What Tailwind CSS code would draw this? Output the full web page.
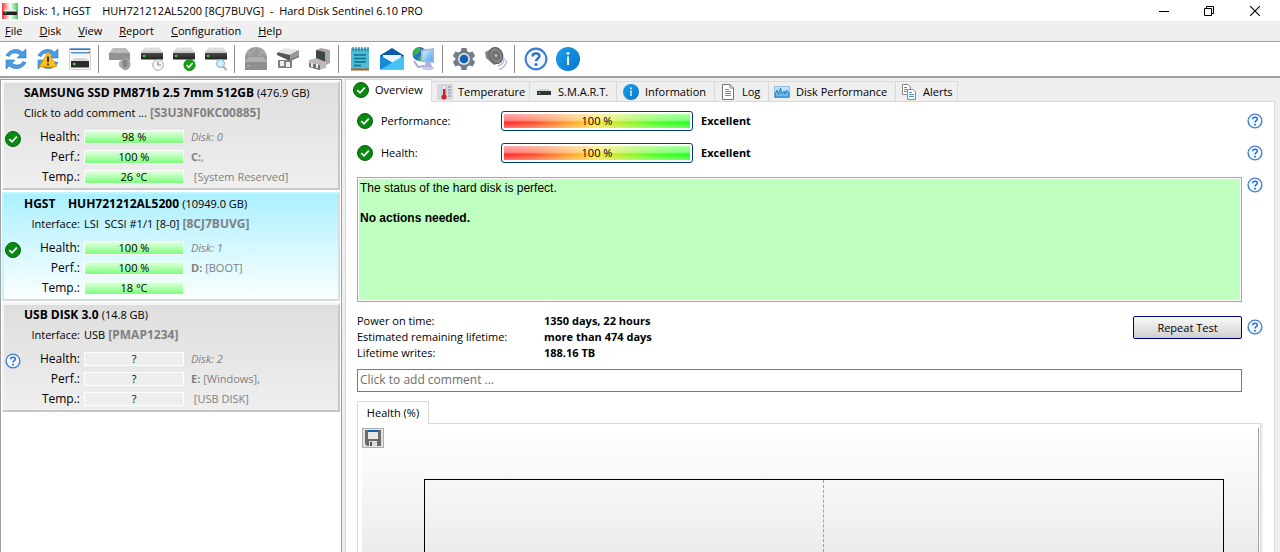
<!DOCTYPE html>
<html lang="en">
<head>
<meta charset="utf-8">
<title>Hard Disk Sentinel</title>
<script src="https://cdn.jsdelivr.net/npm/@tailwindcss/browser@4"></script>
</head>
<body class="h-screen overflow-hidden flex flex-col bg-[#efefef] font-['Open_Sans',sans-serif] text-[12px] leading-4 text-black">
<svg class="absolute w-0 h-0" xmlns="http://www.w3.org/2000/svg">
  <defs>
    <linearGradient id="gInfo" x1="0" y1="0" x2="1" y2="1"><stop offset="0" stop-color="#1aa0ea"/><stop offset="1" stop-color="#0a74cc"/></linearGradient>
    <linearGradient id="gDark" x1="0" y1="0" x2="0" y2="1"><stop offset="0" stop-color="#4a4a4a"/><stop offset="1" stop-color="#222"/></linearGradient>
    <linearGradient id="gTop" x1="0" y1="0" x2="0" y2="1"><stop offset="0" stop-color="#ececec"/><stop offset="1" stop-color="#c4c4c4"/></linearGradient>
    <linearGradient id="gApp" x1="0" y1="0" x2="1" y2="0"><stop offset="0" stop-color="#f33"/><stop offset=".5" stop-color="#fff"/><stop offset="1" stop-color="#3c5"/></linearGradient>
    <linearGradient id="gScreen" x1="0" y1="0" x2="1" y2="1"><stop offset="0" stop-color="#d8f2ff"/><stop offset="1" stop-color="#4aa8ec"/></linearGradient>
    <radialGradient id="gCone"><stop offset="0" stop-color="#ddd"/><stop offset=".35" stop-color="#666"/><stop offset="1" stop-color="#999"/></radialGradient>
  </defs>
  <symbol id="ok" viewBox="0 0 16 16"><circle cx="8" cy="8" r="7.5" fill="#078a0d" stroke="#0a5c12"/><path d="M4.3 8.2 7 10.8 11.8 5.6" fill="none" stroke="#fff" stroke-width="1.7"/></symbol>
  <symbol id="help" viewBox="0 0 16 16"><circle cx="8" cy="8" r="6.9" fill="#f2f7ff" stroke="#3f7dd4" stroke-width="1.4"/><path d="M5.7 6.3C5.7 3.6 10.3 3.7 10.3 6.2 10.3 7.7 8 7.7 8 9.5" fill="none" stroke="#2f6dcb" stroke-width="1.5"/><circle cx="8" cy="11.7" r="1" fill="#2f6dcb"/></symbol>
  <symbol id="info" viewBox="0 0 24 24"><circle cx="12" cy="12" r="12" fill="url(#gInfo)"/><circle cx="12" cy="6.4" r="1.4" fill="#fff"/><path d="M12 9.5V18" stroke="#fff" stroke-width="2"/></symbol>
  <symbol id="sync" viewBox="0 0 24 24"><path d="M2 8.5C5 2 14 .5 18.5 5L22 2V11H13L16 7.8C12.5 5 7 5.5 5.2 9.5Z" fill="#4a9be0" stroke="#2878c0" stroke-width=".6"/><path d="M22 15.5C19 22 10 23.5 5.500 19L2 22V13H11L8 16.2C11.5 19 17 18.5 18.8 14.5Z" fill="#4a9be0" stroke="#2878c0" stroke-width=".6"/></symbol>
  <symbol id="drive" viewBox="0 0 24 24"><path d="M5 1H19L23 6H1Z" fill="url(#gTop)" stroke="#bbb" stroke-width=".5"/><rect x="1" y="6" width="22" height="6.5" fill="url(#gDark)"/><rect x="3" y="8" width="2.4" height="2" fill="#2fe02f"/></symbol>
</svg>

<header class="h-[21px] shrink-0 bg-white flex items-center pl-0.5 pr-px">
  <svg class="w-4 h-4 shrink-0" viewBox="0 0 16 16"><rect width="16" height="16" fill="url(#gApp)"/><path d="M3 6.500H13L15 9H1Z" fill="#eee"/><rect x="1" y="8.500" width="14" height="3.500" fill="#222"/><rect x="2.500" y="9.500" width="2" height="1" fill="#3f3"/></svg>
  <h1 class="ml-[5px] whitespace-pre flex-1 text-[11px]">Disk: 1, HGST    HUH721212AL5200 [8CJ7BUVG]  -  Hard Disk Sentinel 6.10 PRO</h1>
  <div class="flex h-4 items-center">
    <button aria-label="Minimize" class="w-[45px] flex justify-center"><svg class="w-[10px] h-[10px]" viewBox="0 0 10 10"><path d="M0 5.500H10" stroke="#000"/></svg></button>
    <button aria-label="Restore" class="w-[45px] flex justify-center"><svg class="w-[10px] h-[10px]" viewBox="0 0 10 10" fill="none" stroke="#000"><path d="M.5 2.500H7.500V9.500H.5ZM2.500 2.500V.5H9.500V7.500H7.500"/></svg></button>
    <button aria-label="Close" class="w-12 flex justify-center"><svg class="w-[10px] h-[10px]" viewBox="0 0 10 10"><path d="M0 0 10 10M10 0 0 10" stroke="#000" stroke-width="1.1"/></svg></button>
  </div>
</header>

<nav class="h-[21px] shrink-0 border-b border-[#a0a0a0] flex items-center gap-[17px] pl-[5px] text-[11px]">
  <button><u>F</u>ile</button><button><u>D</u>isk</button><button><u>V</u>iew</button><button><u>R</u>eport</button><button><u>C</u>onfiguration</button><button><u>H</u>elp</button>
</nav>

<div role="toolbar" class="h-9 shrink-0 bg-white border-b-2 border-[#a0a0a0] flex items-center [&>button]:w-8 [&>button]:h-8 [&>button]:flex [&>button]:items-center [&>button]:justify-center [&_svg]:w-6 [&_svg]:h-6 [&>i]:w-2 [&>i]:h-7 [&>i]:bg-[linear-gradient(90deg,transparent_2px,#8e8e8e_2px,#8e8e8e_3px,transparent_3px)]">
  <button aria-label="Refresh"><svg><use href="#sync"/></svg></button>
  <button aria-label="Refresh warnings"><svg viewBox="0 0 24 24"><use href="#sync"/><path d="M12 5 20.500 19.500H3.500Z" fill="#fcc21b" stroke="#e9a200" stroke-linejoin="round"/><path d="M12 9.500V15" stroke="#333" stroke-width="2"/><circle cx="12" cy="17.300" r="1.100" fill="#333"/></svg></button>
  <button aria-label="Disk window"><svg viewBox="0 0 24 24"><rect x="1.500" y="1.500" width="21" height="21" fill="#f6f6f6" stroke="#d4d4d4"/><rect x="2" y="1.500" width="20" height="1.500" fill="#2b78c8"/><rect x="3" y="5" width="17" height="1.500" fill="#4b91d8"/><rect x="20" y="4.500" width="2" height="2" fill="#e06a4a"/><path d="M6 11H18L21 15H3Z" fill="#d8d8d8"/><rect x="3" y="14" width="18" height="6.500" fill="#2c2c2c"/><rect x="5" y="16" width="2.500" height="2" fill="#3e3"/></svg></button>
  <i></i>
  <button aria-label="Mute disk"><svg viewBox="0 0 24 24"><path d="M5 1H18L22 6H1Z" fill="#bbb"/><rect x="1" y="6" width="21" height="7" fill="#929292"/><path d="M11 15 17 11V24L11 19Z" fill="#a9a9a9"/><ellipse cx="18" cy="17" rx="4.500" ry="6" fill="#a2a2a2"/><ellipse cx="17" cy="16.500" rx="2.500" ry="4" fill="#858585"/></svg></button>
  <button aria-label="Schedule"><svg viewBox="0 0 24 24"><use href="#drive"/><circle cx="18" cy="18" r="5.300" fill="#f8f8f8" stroke="#aaa"/><path d="M18 14.500V18H21" fill="none" stroke="#888" stroke-width="1.200"/></svg></button>
  <button aria-label="Test"><svg viewBox="0 0 24 24"><use href="#drive"/><circle cx="17.500" cy="18" r="5.700" fill="#13a013" stroke="#0a7a10" stroke-width=".6"/><path d="M14.500 18 16.800 20.300 20.700 15.900" fill="none" stroke="#fff" stroke-width="1.500"/></svg></button>
  <button aria-label="Surface test"><svg viewBox="0 0 24 24"><use href="#drive"/><path d="M18.500 19 22.500 23" stroke="#b9a9a4" stroke-width="2.200"/><circle cx="16.500" cy="16.500" r="3.900" fill="#d2efff" stroke="#8dbcdf" stroke-width="1.200"/></svg></button>
  <i></i>
  <button aria-label="Network disk"><svg viewBox="0 0 24 24"><circle cx="12" cy="11" r="11" fill="#999"/><path d="M4 8C10 4 11 1 12 0M15 1C16 5 19 6 22 8M3 4 9 9M20 4 14 9" stroke="#acacac" stroke-width="1.500" fill="none"/><path d="M5 10H19L23 15H1Z" fill="#b0b0b0"/><rect x="1" y="15" width="22" height="8" fill="#8f8f8f"/><rect x="3" y="18" width="3" height="1.500" fill="#aaa"/></svg></button>
  <button aria-label="Connect disk"><svg viewBox="0 0 24 24"><path d="M1 6 8 2 23 4V10L14 14 1 8Z" fill="#555"/><path d="M1 5 9 1 23 3 14 8Z" fill="#e4e4e4"/><path d="M14 8 23 3V9L14 13Z" fill="#999"/><rect x="2" y="13" width="14" height="8" rx="1" fill="#7e7e7e"/><rect x="4" y="14" width="4" height="5" fill="#eee"/><rect x="10" y="15" width="4" height="5" fill="#eee"/></svg></button>
  <button aria-label="Power"><svg viewBox="0 0 24 24"><path d="M8 3 13 1 22 3V16L16 19 8 14Z" fill="#a8a8a8"/><path d="M8 3 17 5V17L8 14Z" fill="#444"/><rect x="10" y="6" width="4" height="4" fill="#1b5d25"/><path d="M1 13 8 11 18 15V21L11 23 1 20Z" fill="#bcbcbc"/><path d="M1 16 12 18V23L1 20Z" fill="#707070"/><path d="M4 16V20M9 17V21" stroke="#eee" stroke-width="2"/></svg></button>
  <i></i>
  <button aria-label="Report"><svg viewBox="0 0 24 24"><rect x="3" y="1.500" width="18" height="20.500" fill="#4cbcd9"/><rect x="3" y="21.500" width="18" height="2" fill="#b35a20"/><path d="M5 0V4M8 0V4M11 0V4M14 0V4M17 0V4M20 0V4" stroke="#1f7494" stroke-width="1.200"/><path d="M6 8H18M6 11.500H18M6 15H18M6 18.500H13" stroke="#106c87" stroke-width="1.500"/></svg></button>
  <button aria-label="Mail"><svg viewBox="0 0 24 24"><path d="M0 8.500 12 1 24 8.500V12H0Z" fill="#0a5cab"/><path d="M3 8H21V16H3Z" fill="#e9f6fd"/><path d="M0 8.500 24 22.500H0Z" fill="#1a93dd"/><path d="M24 8.500V22.500H0Z" fill="#43c2f3"/><path d="M0 8.500 12 15.500 0 22.500Z" fill="#168bd5"/></svg></button>
  <button aria-label="Network"><svg viewBox="0 0 24 24"><circle cx="7.500" cy="7" r="7" fill="#2a72d2"/><path d="M2 3C6-1 10 1 8 4L5 7 1 9ZM6 10 12 8 11 13 7 14Z" fill="#3bb83b"/><path d="M9 3 22 1V16L9 15Z" fill="#a9b3de"/><path d="M10.500 4.500 20.500 3V14L10.500 13.500Z" fill="url(#gScreen)"/><path d="M14 15H18L21 21 11 22Z" fill="#aeb2da"/><ellipse cx="16" cy="21.500" rx="6" ry="1.800" fill="#c7cae8"/><path d="M2 14 6 20 12 19" fill="none" stroke="#a7a7d0" stroke-width="2"/></svg></button>
  <i></i>
  <button aria-label="Settings"><svg viewBox="0 0 24 24"><path d="M9.500 1H14.500L15.200 4.200 17.400 5.500 20.600 4.500 23.200 9 20.700 11.200V12.800L23.200 15 20.600 19.500 17.400 18.500 15.200 19.800 14.500 23H9.500L8.800 19.800 6.600 18.500 3.400 19.500.8 15 3.300 12.800V11.200L.8 9 3.400 4.500 6.600 5.500 8.800 4.200Z" fill="#747d86"/><circle cx="12" cy="12" r="6" fill="#dfe5ea"/><circle cx="12" cy="12" r="4.300" fill="#0b62b5"/></svg></button>
  <button aria-label="Sound"><svg viewBox="0 0 24 24"><path d="M1 5 9 1 17 15 10 18 2 11Z" fill="#858585"/><ellipse cx="12" cy="8.500" rx="6.500" ry="8" transform="rotate(-20 12 8.500)" fill="url(#gCone)" stroke="#5c5c5c" stroke-width="1.300"/><path d="M20 11C21 14 18 18 14 19M22.500 13C23 17 19 21.500 15 22.500" fill="none" stroke="#b5b5db" stroke-width="1.500"/></svg></button>
  <i></i>
  <button aria-label="Help"><svg><use href="#help"/></svg></button>
  <button aria-label="About"><svg><use href="#info"/></svg></button>
</div>

<div class="flex-1 min-h-0 flex pt-px">
  <aside class="w-[342px] shrink-0 bg-white border border-[#a0a0a0] border-b-0 pl-px pr-px pt-px flex flex-col gap-0.5">
    <section class="h-[109px] border-2 border-t-[#f4f4f4] border-l-[#f4f4f4] border-r-[#c8c8c8] border-b-[#c8c8c8] bg-linear-to-b from-[#dedede] to-[#efefef]">
      <div class="pl-5 h-5 leading-5 whitespace-pre"><b>SAMSUNG SSD PM871b 2.5 7mm 512GB</b> <span class="text-[11px]">(476.9 GB)</span></div>
      <div class="pl-5 h-5 leading-5"><span class="text-[11px]">Click to add comment ...</span> <b class="text-[#808080]">[S3U3NF0KC00885]</b></div>
      <div class="flex pt-1">
        <svg class="w-4 h-4 mt-1 ml-px"><use href="#ok"/></svg>
        <dl class="grid grid-cols-[59px_100px_1fr] gap-x-1 auto-rows-[20px] items-center [&>dt]:text-right [&>dd:nth-of-type(odd)]:h-[14px] [&>dd:nth-of-type(odd)]:leading-3 [&>dd:nth-of-type(odd)]:text-center [&>dd:nth-of-type(odd)]:border [&>dd:nth-of-type(odd)]:border-white [&>dd:nth-of-type(odd)]:bg-linear-to-b [&>dd:nth-of-type(odd)]:from-[#e2ffe2] [&>dd:nth-of-type(odd)]:to-[#78ff78] [&>dd:nth-of-type(even)]:pl-[3px] [&>dd:nth-of-type(even)]:text-[#808080] [&>dd:nth-of-type(even)]:whitespace-pre [&>dd]:text-[11px]">
          <dt>Health:</dt><dd>98 %</dd><dd><em>Disk: 0</em></dd>
          <dt>Perf.:</dt><dd>100 %</dd><dd><b>C:</b>,</dd>
          <dt>Temp.:</dt><dd>26 °C</dd><dd> [System Reserved]</dd>
        </dl>
      </div>
    </section>
    <section class="h-[109px] border-2 border-t-[#c2f5ff] border-l-[#c2f5ff] border-r-[#d4dfe2] border-b-[#d8dee0] bg-linear-to-b from-[#aaf0ff] to-[#fafeff]">
      <div class="pl-5 h-5 leading-5 whitespace-pre"><b>HGST    HUH721212AL5200</b> <span class="text-[11px]">(10949.0 GB)</span></div>
      <div class="pl-5 h-5 leading-5 flex gap-1"><span class="w-14 text-right text-[11px]">Interface:</span><span class="whitespace-pre"><span class="text-[11px]">LSI  SCSI #1/1 [8-0]</span> <b class="text-[#808080]">[8CJ7BUVG]</b></span></div>
      <div class="flex pt-1">
        <svg class="w-4 h-4 mt-1 ml-px"><use href="#ok"/></svg>
        <dl class="grid grid-cols-[59px_100px_1fr] gap-x-1 auto-rows-[20px] items-center [&>dt]:text-right [&>dd:nth-of-type(odd)]:h-[14px] [&>dd:nth-of-type(odd)]:leading-3 [&>dd:nth-of-type(odd)]:text-center [&>dd:nth-of-type(odd)]:border [&>dd:nth-of-type(odd)]:border-white [&>dd:nth-of-type(odd)]:bg-linear-to-b [&>dd:nth-of-type(odd)]:from-[#e2ffe2] [&>dd:nth-of-type(odd)]:to-[#78ff78] [&>dd:nth-of-type(even)]:pl-[3px] [&>dd:nth-of-type(even)]:text-[#808080] [&>dd:nth-of-type(even)]:whitespace-pre [&>dd]:text-[11px]">
          <dt>Health:</dt><dd>100 %</dd><dd><em>Disk: 1</em></dd>
          <dt>Perf.:</dt><dd>100 %</dd><dd><b>D:</b> [BOOT]</dd>
          <dt>Temp.:</dt><dd>18 °C</dd>
        </dl>
      </div>
    </section>
    <section class="h-[109px] border-2 border-t-[#f4f4f4] border-l-[#f4f4f4] border-r-[#c8c8c8] border-b-[#c8c8c8] bg-linear-to-b from-[#dedede] to-[#efefef]">
      <div class="pl-5 h-5 leading-5"><b>USB DISK 3.0</b> <span class="text-[11px]">(14.8 GB)</span></div>
      <div class="pl-5 h-5 leading-5 flex gap-1"><span class="w-14 text-right text-[11px]">Interface:</span><span><span class="text-[11px]">USB</span> <b class="text-[#808080]">[PMAP1234]</b></span></div>
      <div class="flex pt-1">
        <svg class="w-4 h-4 mt-1 ml-px"><use href="#help"/></svg>
        <dl class="grid grid-cols-[59px_100px_1fr] gap-x-1 auto-rows-[20px] items-center [&>dt]:text-right [&>dd:nth-of-type(odd)]:h-[14px] [&>dd:nth-of-type(odd)]:leading-3 [&>dd:nth-of-type(odd)]:text-center [&>dd:nth-of-type(odd)]:border [&>dd:nth-of-type(odd)]:border-white [&>dd:nth-of-type(odd)]:bg-[#eee] [&>dd:nth-of-type(even)]:pl-[3px] [&>dd:nth-of-type(even)]:text-[#808080] [&>dd:nth-of-type(even)]:whitespace-pre [&>dd]:text-[11px]">
          <dt>Health:</dt><dd>?</dd><dd><em>Disk: 2</em></dd>
          <dt>Perf.:</dt><dd>?</dd><dd><b>E:</b> [Windows],</dd>
          <dt>Temp.:</dt><dd>?</dd><dd> [USB DISK]</dd>
        </dl>
      </div>
    </section>
  </aside>

  <main class="flex-1 min-w-0 ml-[3px] mr-[5px] flex flex-col text-[11px]">
    <div role="tablist" class="h-[23px] shrink-0 flex items-end relative z-10 -mb-px [&>button]:flex [&>button]:items-center [&>button]:border-[#d9d9d9] [&>button]:whitespace-nowrap [&_svg]:w-4 [&_svg]:h-4 [&_svg]:shrink-0">
      <button role="tab" aria-selected="true" class="w-[87px] h-[23px] bg-white border-l border-r border-t pl-[7px] gap-1.5 pb-0.5"><svg><use href="#ok"/></svg>Overview</button>
      <button role="tab" class="w-[98px] h-[21px] border-y border-r pl-[5px] gap-[5px]"><svg viewBox="0 0 16 16"><rect width="16" height="16" fill="#d3dae2"/><rect x="5" y="1" width="4" height="11" rx="2" fill="#eee" stroke="#b99" stroke-width=".5"/><rect x="6" y="5" width="2.500" height="8" fill="#c22"/><circle cx="7" cy="13" r="2.600" fill="#c22"/><path d="M11 3H14M11 6H14M11 9H14M11 12H14" stroke="#889"/></svg>Temperature</button>
      <button role="tab" class="w-[87px] h-[21px] border-y border-r pl-1.5 gap-1.5"><svg viewBox="0 0 16 16"><path d="M3 5H13L15 8H1Z" fill="#d4d4d4"/><rect x="1" y="7" width="14" height="4" fill="#333"/><rect x="2.500" y="8.500" width="2" height="1" fill="#3f3"/></svg>S.M.A.R.T.</button>
      <button role="tab" class="w-[98px] h-[21px] border-y border-r pl-1.5 gap-1.5"><svg><use href="#info"/></svg>Information</button>
      <button role="tab" class="w-[54px] h-[21px] border-y border-r pl-[5px] gap-1.5"><svg viewBox="0 0 16 16"><path d="M2.500.5H10L13.500 4V15.500H2.500Z" fill="#fff" stroke="#777"/><path d="M10 .5V4H13.500M5 5.500H9M5 7.500H11M5 9.500H11M5 11.500H11" fill="none" stroke="#888"/></svg>Log</button>
      <button role="tab" class="w-[127px] h-[21px] border-y border-r pl-[5px] gap-1.5"><svg viewBox="0 0 16 16"><rect x=".5" y="2.500" width="15" height="11" fill="#bfe3f8" stroke="#8ebcd9"/><path d="M1 10 3 6 4.500 10 6.500 4 8 10 10 7 11 10 12.500 6 15 9V13H1Z" fill="#6cb8ea" stroke="#1a74bd" stroke-width=".9"/></svg>Disk Performance</button>
      <button role="tab" class="w-[62px] h-[21px] border-y border-r pl-[5px] gap-1.5"><svg viewBox="0 0 16 16"><g fill="#fff" stroke="#888"><path d="M1.500.5H7L9.500 3V10.500H1.500Z"/><path d="M6.500 5.500H12L14.500 8V15.500H6.500Z"/></g><path d="M3 3.500H6M3 5.500H6M3 7.500H6M8 8.500H11M8 10.500H13M8 12.500H13" stroke="#4b8fdc"/></svg>Alerts</button>
    </div>

    <div class="flex-1 min-h-0 bg-white border border-b-0 border-[#d9d9d9] pl-[11px] pt-[9px] pr-[11px] flex flex-col">
      <div class="h-5 flex items-center"><svg class="w-4 h-4"><use href="#ok"/></svg><span class="w-30 ml-2">Performance:</span>
        <div class="w-48 h-5 rounded-[3px] border border-[#003c74] p-0.5 bg-white"><div class="h-full text-center leading-[14px] bg-[linear-gradient(180deg,rgba(255,255,255,.6),rgba(255,255,255,.4)_45%,transparent_60%,rgba(255,255,255,.35)),linear-gradient(90deg,#ff2a2a,#ff4a2a_15%,#ffe02a_50%,#55ff22_80%,#22ff22)]">100 %</div></div>
        <b class="ml-2 flex-1">Excellent</b><button aria-label="Performance help"><svg class="w-4 h-4"><use href="#help"/></svg></button></div>
      <div class="h-5 mt-3 flex items-center"><svg class="w-4 h-4"><use href="#ok"/></svg><span class="w-30 ml-2">Health:</span>
        <div class="w-48 h-5 rounded-[3px] border border-[#003c74] p-0.5 bg-white"><div class="h-full text-center leading-[14px] bg-[linear-gradient(180deg,rgba(255,255,255,.6),rgba(255,255,255,.4)_45%,transparent_60%,rgba(255,255,255,.35)),linear-gradient(90deg,#ff2a2a,#ff4a2a_15%,#ffe02a_50%,#55ff22_80%,#22ff22)]">100 %</div></div>
        <b class="ml-2 flex-1">Excellent</b><button aria-label="Health help"><svg class="w-4 h-4"><use href="#help"/></svg></button></div>
      <div class="mt-3.5 flex items-start gap-[5px]">
        <div class="flex-1 h-[125px] border border-[#a5a5ad] p-px bg-white"><div class="h-full bg-[#bfffbf] pl-px pt-0.5 font-['Liberation_Sans',sans-serif] text-[12px] leading-[15px]">The status of the hard disk is perfect.<br><br><b>No actions needed.</b></div></div>
        <button aria-label="Status help"><svg class="w-4 h-4"><use href="#help"/></svg></button>
      </div>
      <div class="mt-[11px] flex items-start">
        <dl class="flex-1 grid grid-cols-[187px_1fr] [&>dd]:font-bold"><dt>Power on time:</dt><dd>1350 days, 22 hours</dd><dt>Estimated remaining lifetime:</dt><dd>more than 474 days</dd><dt>Lifetime writes:</dt><dd>188.16 TB</dd></dl>
        <button class="w-[109px] h-[23px] mt-[3px] border border-[#000080] rounded-[2px] bg-linear-to-b from-[#fafafa] to-[#cfcfcf]">Repeat Test</button>
        <button aria-label="Test help" class="ml-[5px] mt-1.5"><svg class="w-4 h-4"><use href="#help"/></svg></button>
      </div>
      <input aria-label="Comment" placeholder="Click to add comment ..." class="h-[23px] shrink-0 mt-2 mr-[21px] border border-[#7a7a7a] px-0.5 pb-0.5 text-[12px] placeholder:text-[#6d6d6d]">
      <div role="tablist" class="mt-[9px] h-[23px] shrink-0 flex relative z-10 -mb-px"><button role="tab" aria-selected="true" class="w-[72px] bg-white border border-b-0 border-[#d9d9d9]">Health (%)</button></div>
      <div class="flex-1 min-h-0 mr-0.5 border border-b-0 border-[#d9d9d9] pt-1 pl-1 pr-px shadow-[2px_0_0_#f0f0f0]">
        <div class="h-full border-r border-[#a0a0a0] bg-linear-to-b from-white to-[#ececec] flex flex-col">
          <button aria-label="Save chart" class="w-[22px] h-5 shrink-0 border border-[#adadad] bg-[#e3e3e3] flex items-center justify-center"><svg class="w-4 h-4" viewBox="0 0 16 16"><path d="M0 0H16V16H2L0 14Z" fill="#6a6a6a"/><rect x="3" y="0" width="10" height="9" fill="#e6e6e6"/><rect x="3" y="0" width="10" height="2" fill="#0b62b5"/><rect x="4" y="11" width="8" height="5" fill="#ddd"/><rect x="5" y="12" width="2" height="4" fill="#555"/></svg></button>
          <div class="mt-[31px] ml-[62px] mr-[34px] flex-1 flex border border-b-0 border-black"><div class="w-1/2 border-r border-dashed border-[#a0a0a0]"></div></div>
        </div>
      </div>
    </div>
  </main>
</div>
</body>
</html>
